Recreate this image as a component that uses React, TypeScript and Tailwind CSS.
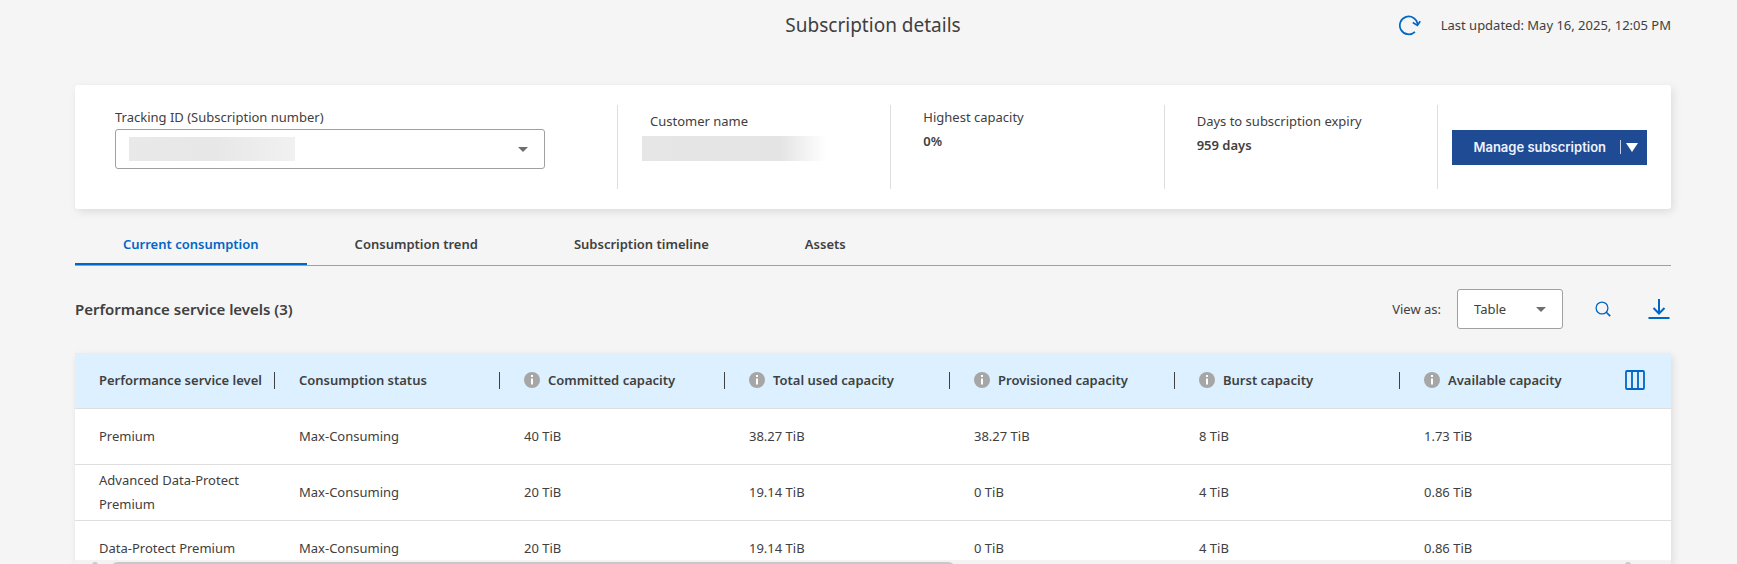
import React from 'react';

const columns = [
  { label: 'Performance service level', info: false },
  { label: 'Consumption status', info: false },
  { label: 'Committed capacity', info: true },
  { label: 'Total used capacity', info: true },
  { label: 'Provisioned capacity', info: true },
  { label: 'Burst capacity', info: true },
  { label: 'Available capacity', info: true },
];

const rows = [
  ['Premium', 'Max-Consuming', '40 TiB', '38.27 TiB', '38.27 TiB', '8 TiB', '1.73 TiB'],
  ['Advanced Data-Protect Premium', 'Max-Consuming', '20 TiB', '19.14 TiB', '0 TiB', '4 TiB', '0.86 TiB'],
  ['Data-Protect Premium', 'Max-Consuming', '20 TiB', '19.14 TiB', '0 TiB', '4 TiB', '0.86 TiB'],
];

const tabs = ['Current consumption', 'Consumption trend', 'Subscription timeline', 'Assets'];

function Caret({ className }: { className: string }) {
  return (
    <svg viewBox="0 0 10 5" className={className} aria-hidden="true">
      <path d="M0 0h10L5 5z" fill="currentColor" />
    </svg>
  );
}

function InfoIcon() {
  return (
    <svg viewBox="0 0 16 16" className="size-4 shrink-0" aria-hidden="true">
      <circle cx="8" cy="8" r="8" fill="#a6a6a6" />
      <rect x="7" y="3" width="2" height="2" fill="#fff" />
      <rect x="7" y="6.5" width="2" height="6" fill="#fff" />
    </svg>
  );
}

function RefreshIcon() {
  return (
    <svg viewBox="0 0 22 22" className="size-[22px]" fill="none" stroke="#0067c5" strokeWidth="1.7" aria-hidden="true">
      <path d="M15.9 17.8A8.9 8.9 0 1 1 18.6 10.6" />
      <path d="M13.8 8.6 18.4 11.4 21.2 7.2" />
    </svg>
  );
}

function SearchIcon() {
  return (
    <svg viewBox="0 0 16 16" className="size-4" fill="none" stroke="#0067c5" strokeWidth="1.3" aria-hidden="true">
      <circle cx="7" cy="7" r="5.9" />
      <path d="m11 11 4.2 4.2" strokeWidth="1.7" />
    </svg>
  );
}

function DownloadIcon() {
  return (
    <svg viewBox="0 0 22 22" className="size-[22px]" fill="none" stroke="#0067c5" strokeWidth="2" aria-hidden="true">
      <path d="M11 1v14M5.5 10l5.5 5.5 5.5-5.5M.5 20h21" />
    </svg>
  );
}

function ColumnsIcon() {
  return (
    <svg viewBox="0 0 20 20" className="size-5" fill="none" stroke="#0067c5" strokeWidth="1.8" aria-hidden="true">
      <rect x="1" y="1" width="18" height="18" rx="1" />
      <path d="M7 1v18M13 1v18" />
    </svg>
  );
}

export default function App() {
  return (
    <main className="flex h-screen flex-col overflow-hidden bg-[#f5f5f5] pr-[66px] pl-[75px] font-['Noto_Sans','Open_Sans',sans-serif] text-[13px] leading-6 text-[#404040]">
      <header className="grid shrink-0 grid-cols-[1fr_auto_1fr] items-center pt-[9px] pb-11">
        <h1 className="col-start-2 text-[19px] leading-8">Subscription details</h1>
        <div className="flex items-center justify-end gap-5">
          <button type="button" aria-label="Refresh">
            <RefreshIcon />
          </button>
          <span>Last updated: May 16, 2025, 12:05 PM</span>
        </div>
      </header>

      <section className="flex shrink-0 rounded-[3px] bg-white py-5 shadow-[2px_3px_8px_rgba(0,0,0,0.1)]">
        <div className="w-[542px] pr-[72px] pl-10">
          <label htmlFor="tracking" className="block">
            Tracking ID (Subscription number)
          </label>
          <div className="relative">
            <select id="tracking" className="block h-10 w-full appearance-none rounded-[3px] border border-[#a0a0a0] bg-white px-4">
              <option value=""></option>
            </select>
            <div className="pointer-events-none absolute inset-0 flex items-center justify-between pr-[17px] pl-3.5">
              <span className="h-6 w-[166px] bg-linear-to-r from-[#e9e9e9] via-[#e7e7e7] to-[#f1f1f1]" />
              <Caret className="w-2.5 text-[#6e6e6e]" />
            </div>
          </div>
        </div>
        <div className="grid h-[84px] flex-1 grid-cols-3">
          <div className="border-l border-[#dedede] pt-1 pl-6">
            <p className="pl-2">Customer name</p>
            <div className="mt-[3px] h-[25px] w-[184px] bg-linear-to-r from-[#e6e6e6] via-[#e4e4e4] via-75% to-white" />
          </div>
          <div className="border-l border-[#dedede] pl-8">
            <p>Highest capacity</p>
            <p className="font-semibold">0%</p>
          </div>
          <div className="border-l border-[#dedede] pt-1 pl-8">
            <p>Days to subscription expiry</p>
            <p className="font-semibold">959 days</p>
          </div>
        </div>
        <div className="flex h-[84px] items-center border-l border-[#dedede] pr-6 pl-3.5">
          <button
            type="button"
            className="flex h-[35px] w-[195px] items-center justify-end bg-[#1f4a94] pr-[9px] font-['Inter',sans-serif] text-[13px] font-semibold text-[#eef2fa]"
          >
            <span>Manage subscription</span>
            <span className="mr-[5px] ml-3.5 h-3.5 w-px bg-[#c5d0e4]" />
            <svg viewBox="0 0 12 9" className="w-3" aria-hidden="true">
              <path d="M0 0h12L6 9z" fill="#fff" />
            </svg>
          </button>
        </div>
      </section>

      <nav role="tablist" className="mt-[17px] flex shrink-0 border-b border-[#a0a0a0]">
        {tabs.map((tab, i) => (
          <button
            key={tab}
            type="button"
            role="tab"
            aria-selected={i === 0}
            className={
              i === 0
                ? 'border-b-2 border-[#0067c5] px-12 pt-1.5 pb-[7px] font-semibold text-[#0067c5]'
                : 'border-b-2 border-transparent px-12 pt-1.5 pb-[7px] font-semibold'
            }
          >
            {tab}
          </button>
        ))}
      </nav>

      <div className="flex shrink-0 items-center pt-[23px] pr-px pb-6">
        <h2 className="flex-1 text-[15px] font-semibold">Performance service levels (3)</h2>
        <label htmlFor="view" className="mr-4">
          View as:
        </label>
        <div className="relative mr-8">
          <select id="view" className="block h-10 w-[106px] appearance-none rounded-[3px] border border-[#a0a0a0] bg-white px-4">
            <option>Table</option>
          </select>
          <div className="pointer-events-none absolute inset-y-0 right-[17px] flex items-center">
            <Caret className="w-2.5 text-[#6e6e6e]" />
          </div>
        </div>
        <button type="button" aria-label="Search" className="mr-[37px]">
          <SearchIcon />
        </button>
        <button type="button" aria-label="Download">
          <DownloadIcon />
        </button>
      </div>

      <div className="flex min-h-0 flex-1 flex-col bg-white shadow-[2px_3px_8px_rgba(0,0,0,0.1)]">
        <div className="min-h-0 flex-1 overflow-hidden">
          <table className="w-full table-fixed border-collapse text-left">
            <colgroup>
              <col className="w-[200px]" />
              <col />
              <col />
              <col />
              <col />
              <col />
              <col />
              <col className="w-[46px]" />
            </colgroup>
            <thead>
              <tr className="h-[55px] border-b border-[#dedede] bg-[#dcf0ff]">
                {columns.map((col, i) => (
                  <th key={col.label} scope="col" className="p-0 pl-6 font-semibold whitespace-nowrap">
                    <div className={i < 6 ? 'flex h-[17px] items-center gap-2 border-r border-[#404040]' : 'flex h-[17px] items-center gap-2'}>
                      {col.info && <InfoIcon />}
                      {col.label}
                    </div>
                  </th>
                ))}
                <th className="p-0">
                  <button type="button" aria-label="Choose columns" className="block">
                    <ColumnsIcon />
                  </button>
                </th>
              </tr>
            </thead>
            <tbody>
              {rows.map((row) => (
                <tr key={row[0]} className="h-14 border-b border-[#dedede]">
                  {row.map((cell, i) => (
                    <td key={i} className="py-0 pr-4 pl-6">
                      {cell}
                    </td>
                  ))}
                  <td />
                </tr>
              ))}
            </tbody>
          </table>
        </div>
        <div className="flex h-1 shrink-0 items-start overflow-hidden bg-[#f3f3f3] pt-0.5 pr-10 pl-[17px]">
          <span className="h-2 w-1.5 shrink-0 rounded-t-full bg-[#c8c8c8]" />
          <span className="ml-3 h-2 w-[55%] shrink-0 rounded-t-full bg-[#c8c8c8]" />
          <span className="ml-auto h-2 w-1.5 shrink-0 rounded-t-full bg-[#c8c8c8]" />
        </div>
      </div>
    </main>
  );
}
